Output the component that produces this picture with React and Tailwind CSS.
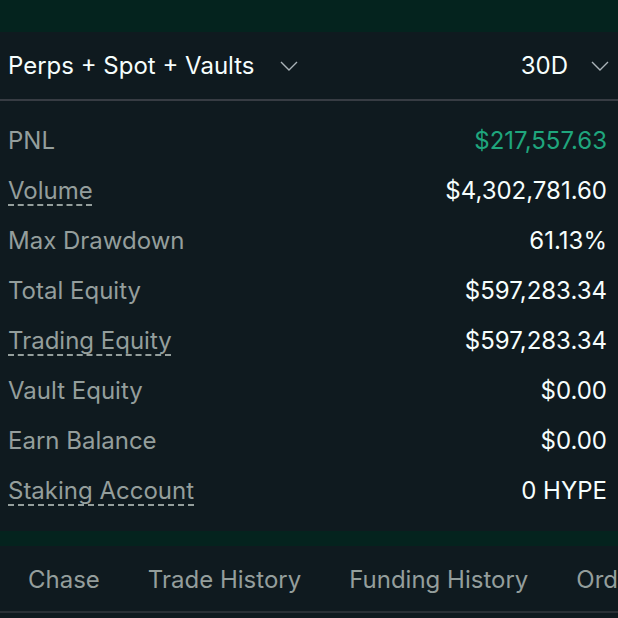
const rows = [
  { label: 'PNL', value: '$217,557.63', green: true },
  { label: 'Volume', value: '$4,302,781.60', dashed: true },
  { label: 'Max Drawdown', value: '61.13%' },
  { label: 'Total Equity', value: '$597,283.34' },
  { label: 'Trading Equity', value: '$597,283.34', dashed: true },
  { label: 'Vault Equity', value: '$0.00' },
  { label: 'Earn Balance', value: '$0.00' },
  { label: 'Staking Account', value: '0 HYPE', dashed: true },
];

const tabs = ['Chase', 'Trade History', 'Funding History', 'Order History'];

function Chevron() {
  return (
    <svg width="18" height="10" viewBox="0 0 18 10" fill="none" className="shrink-0">
      <polyline points="1,1 9,9 17,1" stroke="#aab3b8" strokeWidth="1.4" />
    </svg>
  );
}

export default function App() {
  return (
    <div
      className="w-[618px] h-[618px] overflow-hidden bg-[#04231e] flex flex-col"
      style={{ fontFamily: 'Inter, "Noto Sans", sans-serif' }}
    >
      <div className="h-[32px] shrink-0" />

      <div className="bg-[#0f1a1f] flex flex-col">
        <div className="h-[67px] flex items-center justify-between pl-[8px] pr-[9px]">
          <div className="flex items-center gap-[25px]">
            <span className="text-[24px] text-[#f6fefd]">Perps + Spot + Vaults</span>
            <Chevron />
          </div>
          <div className="flex items-center gap-[23px]">
            <span className="text-[24px] text-[#f6fefd]">30D</span>
            <Chevron />
          </div>
        </div>
        <div className="h-[2px] bg-[#373c43]" />

        <div className="flex flex-col pt-[15px] pb-[15px] pl-[8px] pr-[11px]">
          {rows.map((r) => (
            <div key={r.label} className="h-[50px] flex items-center justify-between text-[24px]">
              <span
                className={
                  r.dashed
                    ? 'text-[#949e9c] underline decoration-dashed decoration-[#949e9c] decoration-[1.5px] underline-offset-[5px]'
                    : 'text-[#949e9c]'
                }
              >
                {r.label}
              </span>
              <span className={r.green ? 'text-[#1fa67d]' : 'text-[#f6fefd]'}>{r.value}</span>
            </div>
          ))}
        </div>
      </div>

      <div className="h-[15px] shrink-0" />

      <div className="bg-[#0f1a1f] flex-1 flex flex-col">
        <div className="h-[67px] flex items-center gap-[48px] pl-[28px] pt-[3px] whitespace-nowrap border-b-2 border-[#2a3036] overflow-hidden">
          {tabs.map((t) => (
            <span key={t} className="text-[24px] text-[#949e9c]">
              {t}
            </span>
          ))}
        </div>
      </div>
    </div>
  );
}
